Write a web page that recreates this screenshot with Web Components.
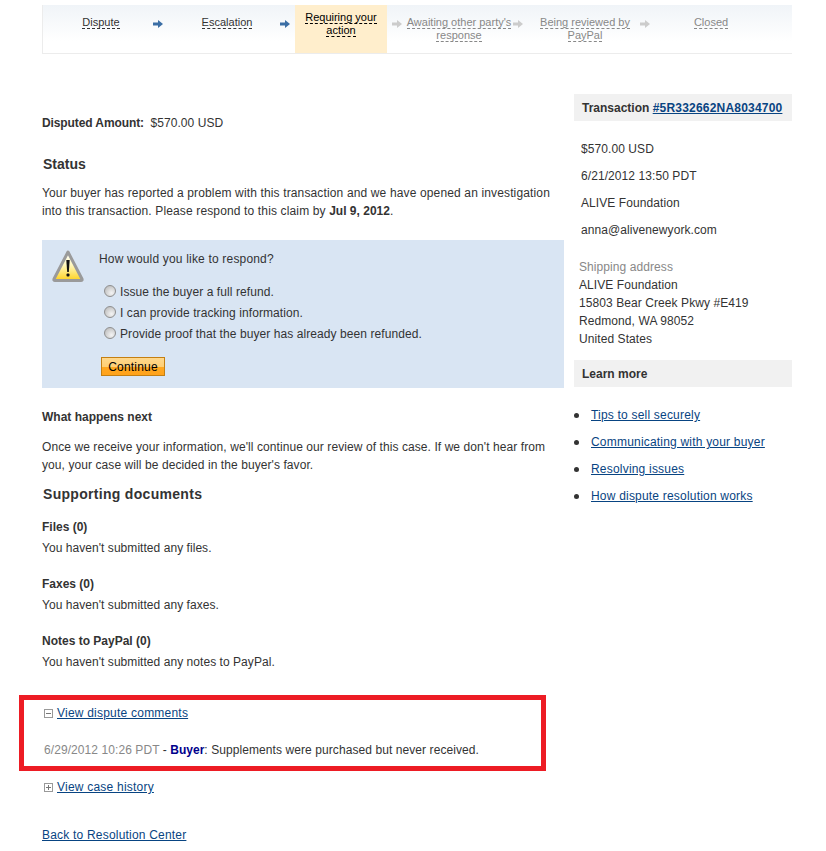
<!DOCTYPE html>
<html>
<head>
<meta charset="utf-8">
<title>Case details</title>
<style>
    html, body { margin: 0; background: #fff; }
    body { font: 12px/18px "Liberation Sans", Arial, sans-serif; color: #333; letter-spacing: .08px; }
    a { color: #084482; letter-spacing: .2px; }
    b { letter-spacing: 0; }
</style>
</head>
<body>
<case-page>
    <case-stepper>
        <step-item w="76" ml="20" state="done">Dispute</step-item>
        <step-arrow ml="14" state="done"></step-arrow>
        <step-item w="106" ml="11" state="done">Escalation</step-item>
        <step-arrow state="done"></step-arrow>
        <step-item w="92" ml="5" state="current"><span>Requiring your</span> <span>action</span></step-item>
        <step-arrow ml="5"></step-arrow>
        <step-item w="108" ml="3"><span>Awaiting other party's</span> <span>response</span></step-item>
        <step-arrow></step-arrow>
        <step-item w="104" ml="10"><span>Being reviewed by</span> <span>PayPal</span></step-item>
        <step-arrow ml="3"></step-arrow>
        <step-item w="122">Closed</step-item>
    </case-stepper>

    <main-column slot="main">
        <amount-line label="Disputed Amount:">$570.00 USD</amount-line>
        <section-title top="23">Status</section-title>
        <text-block top="11" style="letter-spacing:.14px">Your buyer has reported a problem with this transaction and we have opened an investigation<br>into this transaction. Please respond to this claim by <b>Jul 9, 2012</b>.</text-block>
        <response-box>
            <radio-option>Issue the buyer a full refund.</radio-option>
            <radio-option>I can provide tracking information.</radio-option>
            <radio-option>Provide proof that the buyer has already been refunded.</radio-option>
        </response-box>
        <text-block top="20"><b>What happens next</b></text-block>
        <text-block top="12">Once we receive your information, we'll continue our review of this case. If we don't hear from<br>you, your case will be decided in the buyer's favor.</text-block>
        <section-title top="11" style="letter-spacing:.3px">Supporting documents</section-title>
        <doc-group top="15" name="Files (0)">You haven't submitted any files.</doc-group>
        <doc-group top="18" name="Faxes (0)">You haven't submitted any faxes.</doc-group>
        <doc-group top="18" name="Notes to PayPal (0)">You haven't submitted any notes to PayPal.</doc-group>
        <comments-block>
            <toggle-link mode="open">View dispute comments</toggle-link>
            <comment-line stamp="6/29/2012 10:26 PDT" who="Buyer">Supplements were purchased but never received.</comment-line>
        </comments-block>
        <toggle-link mode="closed" style="margin-top:19px">View case history</toggle-link>
        <text-block top="30"><a href="#">Back to Resolution Center</a></text-block>
    </main-column>

    <side-column slot="side">
        <panel-head>Transaction <a href="#">#5R332662NA8034700</a></panel-head>
        <side-rows>
            <div>$570.00 USD</div>
            <div>6/21/2012 13:50 PDT</div>
            <div>ALIVE Foundation</div>
            <div>anna@alivenewyork.com</div>
        </side-rows>
        <ship-address>
            ALIVE Foundation<br>
            15803 Bear Creek Pkwy #E419<br>
            Redmond, WA 98052<br>
            United States
        </ship-address>
        <panel-head style="margin-top:12px">Learn more</panel-head>
        <link-list>
            <a href="#">Tips to sell securely</a>
            <a href="#">Communicating with your buyer</a>
            <a href="#">Resolving issues</a>
            <a href="#">How dispute resolution works</a>
        </link-list>
    </side-column>
</case-page>

<script>
class SimpleElement extends HTMLElement {
    constructor() {
        super();
        this.myRoot = this.attachShadow({ mode: "open" });
        this.myRoot.innerHTML = this.render();
    }
    render() { return `<slot></slot>`; }
}

class CasePage extends SimpleElement {
    render() {
        return `
            <style>
            :host { display: block; width: 750px; padding: 5px 0 0 42px; }
            .cols { display: flex; gap: 10px; margin-top: 40px; }
            </style>
            <slot></slot>
            <div class="cols">
                <slot name="main"></slot>
                <slot name="side"></slot>
            </div>
        `;
    }
}

class CaseStepper extends SimpleElement {
    render() {
        return `
            <style>
            :host {
                display: flex;
                height: 48px;
                box-sizing: content-box;
                border-left: 1px solid #ececec;
                border-bottom: 1px solid #ececec;
                background: linear-gradient(#f0f4f8, #fff 36px);
                font-size: 11px;
                letter-spacing: 0;
            }
            </style>
            <slot></slot>
        `;
    }
}

class StepItem extends SimpleElement {
    render() {
        const w = this.getAttribute("w");
        const ml = this.getAttribute("ml") ?? 0;
        const state = this.getAttribute("state");
        const color = state === "current" ? "#000" : state === "done" ? "#333" : "#888";
        return `
            <style>
            :host {
                display: block;
                flex: none;
                width: ${w}px;
                margin-left: ${ml}px;
                padding-top: ${state === "current" ? 6 : 11}px;
                box-sizing: border-box;
                text-align: center;
                line-height: 13px;
                color: ${color};
                background: ${state === "current" ? "#ffeecc" : "transparent"};
            }
            .t { border-bottom: 1px dashed ${color}; }
            ::slotted(span) { border-bottom: 1px dashed ${color}; display: table; margin: 0 auto; line-height: 12px; white-space: nowrap; }
            </style>
            ${this.querySelector("span") ? `<slot></slot>` : `<span class="t"><slot></slot></span>`}
        `;
    }
}

class StepArrow extends SimpleElement {
    render() {
        const ml = this.getAttribute("ml") ?? 0;
        const fill = this.getAttribute("state") === "done" ? "#3b6ea5" : "#cccccc";
        return `
            <style>
            :host { display: block; flex: none; width: 10px; height: 8px; margin: 15px 0 0 ${ml}px; }
            svg { display: block; }
            </style>
            <svg width="10" height="8" viewBox="0 0 10 8"><path d="M0 2.5H5V0L10 4L5 8V5.5H0Z" fill="${fill}"/></svg>
        `;
    }
}

class MainColumn extends SimpleElement {
    render() {
        return `<style>:host { display: block; width: 522px; flex: none; padding-top: 20px; }</style><slot></slot>`;
    }
}

class SideColumn extends SimpleElement {
    render() {
        return `<style>:host { display: block; width: 218px; flex: none; }</style><slot></slot>`;
    }
}

class AmountLine extends SimpleElement {
    render() {
        return `
            <style>
            :host { display: block; }
            b { margin-right: 3px; letter-spacing: -.1px; }
            </style>
            <b>${this.getAttribute("label")}</b> <slot></slot>
        `;
    }
}

class SectionTitle extends SimpleElement {
    render() {
        return `
            <style>
            :host { display: block; margin-top: ${this.getAttribute("top") ?? 0}px; padding-left: 1px; font-size: 14px; font-weight: bold; letter-spacing: 0; }
            </style>
            <slot></slot>
        `;
    }
}

class TextBlock extends SimpleElement {
    render() {
        return `<style>:host { display: block; margin-top: ${this.getAttribute("top") ?? 0}px; }</style><slot></slot>`;
    }
}

class ResponseBox extends SimpleElement {
    render() {
        return `
            <style>
            :host {
                display: flex;
                height: 148px;
                margin-top: 20px;
                box-sizing: border-box;
                padding: 10px 0 0 10px;
                background: #d9e5f3;
            }
            svg { flex: none; display: block; }
            .body { margin-left: 15px; }
            .ask { margin-bottom: 13px; letter-spacing: .18px; }
            .btn {
                display: block;
                width: 64px;
                height: 19px;
                margin: 13px 0 0 2px;
                padding: 0;
                box-sizing: border-box;
                border: 1px solid #c47f12;
                font: inherit;
                letter-spacing: .2px;
                line-height: 16px;
                color: #000;
                background: linear-gradient(#ffd88c 0, #ffcf75 50%, #ffa822 50%, #ffa21a 100%);
            }
            </style>
            <svg width="32" height="32" viewBox="0 0 32 32">
                <defs>
                    <linearGradient id="warn" x1="0" y1="0" x2="0" y2="1">
                        <stop offset="0" stop-color="#fff"/>
                        <stop offset="0.45" stop-color="#fff8c0"/>
                        <stop offset="1" stop-color="#ffd21e"/>
                    </linearGradient>
                </defs>
                <path d="M16 2L30 29Q30.5 30.5 29 30.5H3Q1.5 30.5 2 29Z" fill="url(#warn)" stroke="#9a9a9a" stroke-width="3" stroke-linejoin="round"/>
                <path d="M14.3 10H17.7L16.8 22H15.2Z" fill="#111"/>
                <rect x="14.5" y="23.5" width="3" height="3" rx="1" fill="#111"/>
            </svg>
            <div class="body">
                <div class="ask">How would you like to respond?</div>
                <slot></slot>
                <button class="btn" type="button">Continue</button>
            </div>
        `;
    }
}

class RadioOption extends SimpleElement {
    render() {
        return `
            <style>
            :host { display: flex; align-items: center; height: 21px; margin-left: 5px; }
            i {
                flex: none;
                width: 12px;
                height: 12px;
                margin: -2px 4px 0 0;
                box-sizing: border-box;
                border-radius: 50%;
                border: 1px solid #8e8e8e;
                background: radial-gradient(circle at 65% 70%, #f4f4f4, #c4c4c4 75%);
            }
            </style>
            <i></i><span><slot></slot></span>
        `;
    }
}

class DocGroup extends SimpleElement {
    render() {
        return `
            <style>
            :host { display: block; margin-top: ${this.getAttribute("top") ?? 0}px; letter-spacing: .05px; }
            b { display: block; margin-bottom: 3px; letter-spacing: 0; }
            </style>
            <b>${this.getAttribute("name")}</b>
            <slot></slot>
        `;
    }
}

class CommentsBlock extends SimpleElement {
    render() {
        return `
            <style>
            :host { display: block; position: relative; margin-top: 33px; }
            .mark {
                position: absolute;
                left: -23px;
                top: -9px;
                width: 527px;
                height: 76px;
                box-sizing: border-box;
                border: 5px solid #ed1c24;
                pointer-events: none;
            }
            </style>
            <slot></slot>
            <div class="mark"></div>
        `;
    }
}

class ToggleLink extends SimpleElement {
    render() {
        const open = this.getAttribute("mode") === "open";
        return `
            <style>
            :host { display: flex; align-items: center; padding-left: 2px; }
            svg { display: block; flex: none; margin-right: 4px; }
            a { color: #084482; letter-spacing: .22px; }
            </style>
            <svg width="9" height="9" viewBox="0 0 9 9">
                <rect x="0.5" y="0.5" width="8" height="8" fill="#fff" stroke="#999"/>
                <path d="${open ? "M2 4.5H7" : "M2 4.5H7M4.5 2V7"}" stroke="#777" fill="none"/>
            </svg>
            <a href="#"><slot></slot></a>
        `;
    }
}

class CommentLine extends SimpleElement {
    render() {
        return `
            <style>
            :host { display: block; margin-top: 19px; padding-left: 2px; }
            .stamp { color: #888; }
            b { color: #00008b; letter-spacing: 0; }
            </style>
            <span class="stamp">${this.getAttribute("stamp")}</span> - <b>${this.getAttribute("who")}</b>: <slot></slot>
        `;
    }
}

class PanelHead extends SimpleElement {
    render() {
        return `
            <style>
            :host {
                display: block;
                height: 27px;
                padding-left: 8px;
                line-height: 28px;
                font-weight: bold;
                letter-spacing: 0;
                background: #f1f1f1;
            }
            </style>
            <slot></slot>
        `;
    }
}

class SideRows extends SimpleElement {
    render() {
        return `
            <style>
            :host { display: grid; gap: 9px; margin-top: 19px; padding-left: 7px; }
            </style>
            <slot></slot>
        `;
    }
}

class ShipAddress extends SimpleElement {
    render() {
        return `
            <style>
            :host { display: block; margin-top: 19px; padding-left: 5px; }
            .label { color: #888; }
            </style>
            <div class="label">Shipping address</div>
            <slot></slot>
        `;
    }
}

class LinkList extends SimpleElement {
    constructor() {
        super();
        const list = this.myRoot.querySelector("ul");
        this.querySelectorAll("a").forEach((link, i) => {
            const row = document.createElement("li");
            const slot = document.createElement("slot");
            slot.name = "item" + i;
            link.slot = slot.name;
            row.append(slot);
            list.append(row);
        });
    }
    render() {
        return `
            <style>
            :host { display: block; margin-top: 19px; }
            ul { margin: 0; padding: 0; list-style: none; display: grid; gap: 9px; }
            li { display: flex; align-items: center; }
            li::before {
                content: "";
                flex: none;
                width: 5px;
                height: 5px;
                margin-right: 12px;
                border-radius: 50%;
                background: #333;
            }
            </style>
            <ul></ul>
        `;
    }
}

customElements.define("case-page", CasePage);
customElements.define("case-stepper", CaseStepper);
customElements.define("step-item", StepItem);
customElements.define("step-arrow", StepArrow);
customElements.define("main-column", MainColumn);
customElements.define("side-column", SideColumn);
customElements.define("amount-line", AmountLine);
customElements.define("section-title", SectionTitle);
customElements.define("text-block", TextBlock);
customElements.define("response-box", ResponseBox);
customElements.define("radio-option", RadioOption);
customElements.define("doc-group", DocGroup);
customElements.define("comments-block", CommentsBlock);
customElements.define("toggle-link", ToggleLink);
customElements.define("comment-line", CommentLine);
customElements.define("panel-head", PanelHead);
customElements.define("side-rows", SideRows);
customElements.define("ship-address", ShipAddress);
customElements.define("link-list", LinkList);
</script>
</body>
</html>
